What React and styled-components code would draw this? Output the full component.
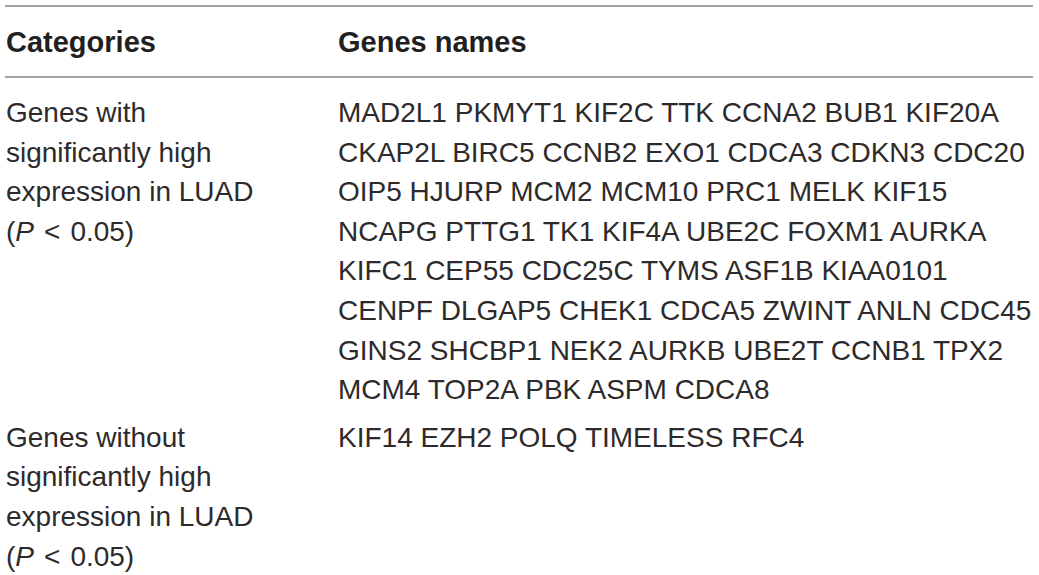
import React from 'react';
import styled, { createGlobalStyle } from 'styled-components';

const GlobalStyle = createGlobalStyle`
  body {
    margin: 0;
    background: #ffffff;
    font-family: "Liberation Sans", Arial, sans-serif;
    color: #231f20;
  }
`;

const Page = styled.div`
  padding: 5px 6px 0 5px;
`;

const Table = styled.div`
  display: grid;
  grid-template-columns: 332px 1fr;
  border-top: 2px solid #a3a3a3;
  font-size: 28px;
`;

const HeadCell = styled.div`
  font-weight: bold;
  font-size: 29px;
  line-height: 34px;
  padding: 18px 0 17px 1px;
  border-bottom: 2px solid #a3a3a3;
  color: #231f20;
`;

const Cell = styled.div`
  line-height: 39.6px;
  padding: ${props => props.first ? '15px' : '0'} 0 8px 1px;
  color: #2e2a2b;
`;

const Line = styled.div`
  white-space: nowrap;
`;

const Em = styled.i`
  font-style: italic;
`;

const Rel = styled.span`
  margin: 0 10px 0 10px;
`;

const rows = [
  {
    category: ['Genes with', 'significantly high', 'expression in LUAD'],
    genes: [
      'MAD2L1 PKMYT1 KIF2C TTK CCNA2 BUB1 KIF20A',
      'CKAP2L BIRC5 CCNB2 EXO1 CDCA3 CDKN3 CDC20',
      'OIP5 HJURP MCM2 MCM10 PRC1 MELK KIF15',
      'NCAPG PTTG1 TK1 KIF4A UBE2C FOXM1 AURKA',
      'KIFC1 CEP55 CDC25C TYMS ASF1B KIAA0101',
      'CENPF DLGAP5 CHEK1 CDCA5 ZWINT ANLN CDC45',
      'GINS2 SHCBP1 NEK2 AURKB UBE2T CCNB1 TPX2',
      'MCM4 TOP2A PBK ASPM CDCA8',
    ],
  },
  {
    category: ['Genes without', 'significantly high', 'expression in LUAD'],
    genes: ['KIF14 EZH2 POLQ TIMELESS RFC4'],
  },
];

function App() {
  return (
    <Page>
      <GlobalStyle />
      <Table>
        <HeadCell>Categories</HeadCell>
        <HeadCell>Genes names</HeadCell>
        {rows.map((row, i) => (
          <React.Fragment key={i}>
            <Cell first={i === 0}>
              {row.category.map(l => <Line key={l}>{l}</Line>)}
              <Line>(<Em>P</Em><Rel>&lt;</Rel>0.05)</Line>
            </Cell>
            <Cell first={i === 0}>
              {row.genes.map(l => <Line key={l}>{l}</Line>)}
            </Cell>
          </React.Fragment>
        ))}
      </Table>
    </Page>
  );
}

export default App;
